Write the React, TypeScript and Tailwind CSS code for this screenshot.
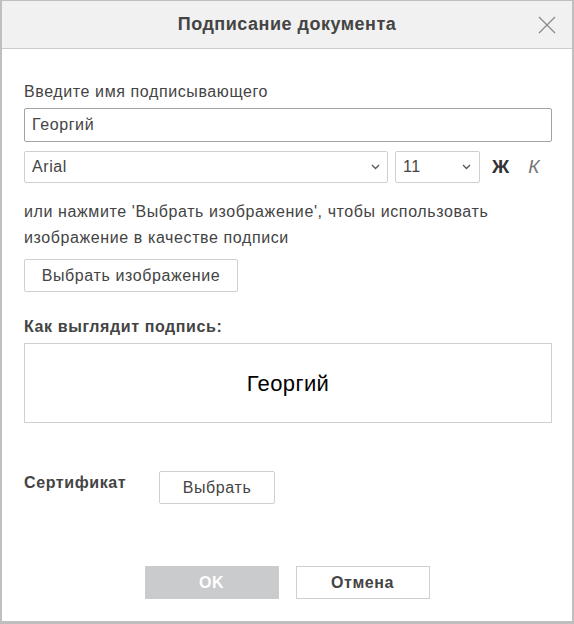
const Chevron = () => (
  <svg width="9" height="6" viewBox="0 0 9 6" className="shrink-0">
    <polyline points="1,1 4.5,4.5 8,1" fill="none" stroke="#555" strokeWidth="1.3" />
  </svg>
);

const App = () => {
  return (
    <div
      className="w-[574px] h-[624px] box-border flex flex-col bg-white border-x-2 border-t border-b-[3px] border-[#bfbfbf] text-[#444] tracking-[0.6px]"
      style={{ fontFamily: '"Liberation Sans", Arial, sans-serif' }}
    >
      <div className="h-[48px] shrink-0 relative flex items-center justify-center bg-[#f1f1f1] border-b border-[#cbcbcb]">
        <span className="text-[18px] font-bold text-[#444] tracking-[0.5px]">Подписание документа</span>
        <button className="absolute right-[16px] top-[15px] w-[18px] h-[18px]">
          <svg width="18" height="18" viewBox="0 0 18 18">
            <path d="M1 1 L17 17 M17 1 L1 17" stroke="#888" strokeWidth="1.2" />
          </svg>
        </button>
      </div>

      <div className="flex flex-col pl-[22px] pr-[20px] pt-[33px] text-[16px]">
        <div className="leading-[20px]">Введите имя подписывающего</div>
        <div className="mt-[6px] h-[34px] w-[528px] border border-[#a3a3a3] rounded-[2px] flex items-center px-[7px]">
          Георгий
        </div>

        <div className="mt-[9px] flex items-center h-[32px]">
          <div className="w-[364px] h-full border border-[#d0d0d0] rounded-[2px] flex items-center justify-between pl-[7px] pr-[7px]">
            <span>Arial</span>
            <Chevron />
          </div>
          <div className="ml-[7px] w-[85px] h-full border border-[#d0d0d0] rounded-[2px] flex items-center justify-between pl-[7px] pr-[8px]">
            <span>11</span>
            <Chevron />
          </div>
          <span className="ml-[12px] text-[19px] font-bold text-[#333] tracking-normal">Ж</span>
          <span className="ml-[19px] text-[19px] italic text-[#777] tracking-normal">К</span>
        </div>

        <p className="mt-[16px] leading-[26px]">
          или нажмите 'Выбрать изображение', чтобы использовать
          <br />
          изображение в качестве подписи
        </p>

        <button className="mt-[8px] h-[33px] w-[214px] border border-[#cfcfcf] rounded-[2px] bg-white text-[#444]">
          Выбрать изображение
        </button>

        <div className="mt-[25px] leading-[20px] font-bold">Как выглядит подпись:</div>
        <div className="mt-[6px] h-[80px] w-[528px] border border-[#cfcfcf] flex items-center justify-center">
          <span className="text-[22px] text-black tracking-[0.4px]">Георгий</span>
        </div>

        <div className="mt-[48px] flex items-start">
          <div className="w-[135px] pt-[2px] leading-[20px] font-bold">Сертификат</div>
          <button className="h-[33px] w-[116px] border border-[#cfcfcf] rounded-[2px] bg-white text-[#444]">
            Выбрать
          </button>
        </div>
      </div>

      <div className="mt-[62px] flex justify-center gap-[17px]">
        <button className="h-[33px] w-[134px] bg-[#c9cbcd] text-white font-bold rounded-[1px]">OK</button>
        <button className="h-[33px] w-[134px] border border-[#cfcfcf] bg-white font-bold text-[#444]">Отмена</button>
      </div>
    </div>
  );
};

export default App;
